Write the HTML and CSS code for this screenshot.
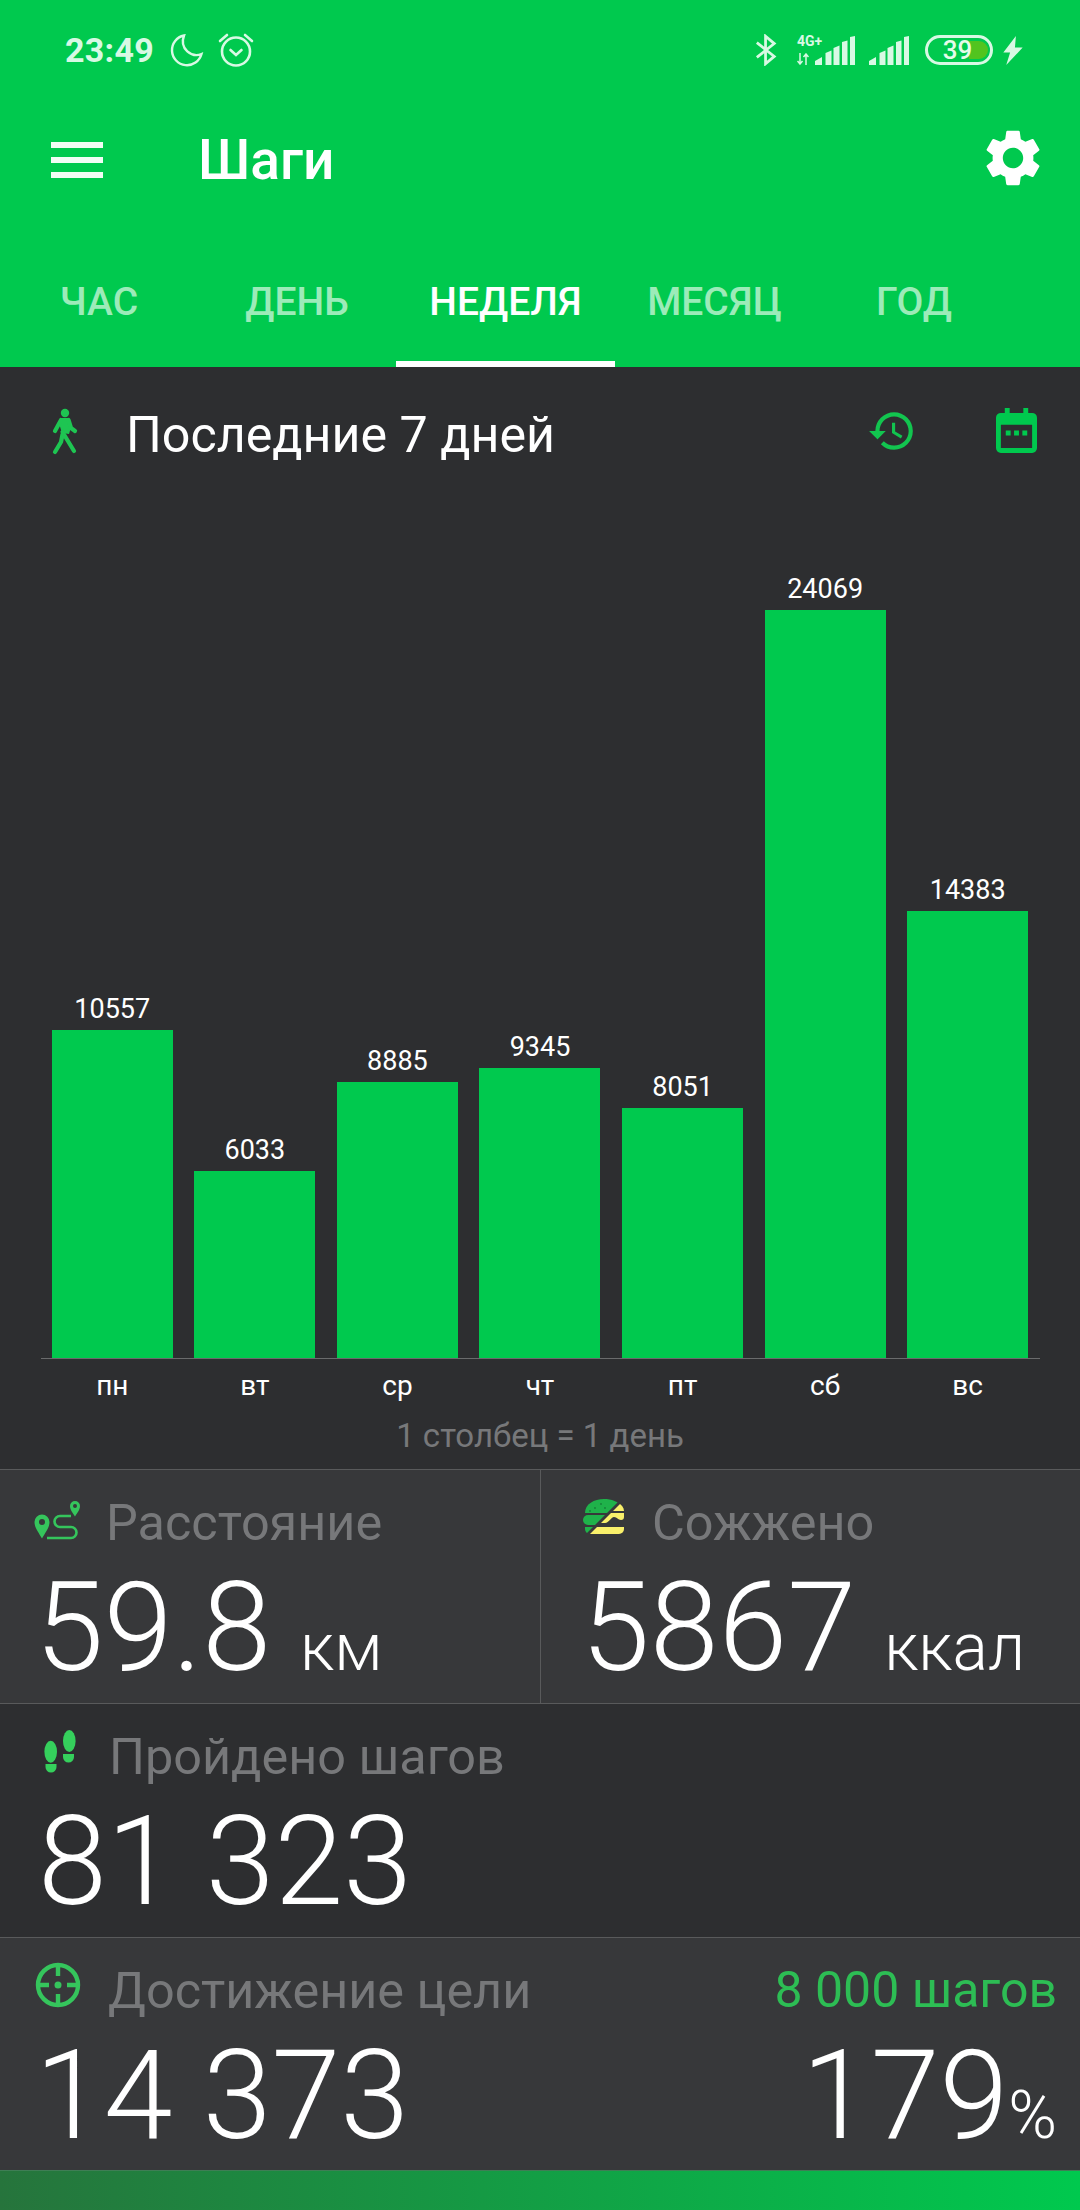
FILE: index.html
```html
<!DOCTYPE html>
<html lang="ru">
<head>
<meta charset="utf-8">
<title>Шаги</title>
<link rel="stylesheet" href="styles.css">
</head>
<body>
<div class="page">
  <header class="appbar">
    <div class="status">
      <div class="status-left">
        <span class="clock">23:49</span>
        <svg class="ico-moon" viewBox="0 0 34 34"><path d="M14 2.500A15 15 0 1 0 31.500 21 C22 25 9 16 14 2.500Z"/></svg>
        <svg class="ico-alarm" viewBox="0 0 36 36"><circle cx="18" cy="19.500" r="14"/><path d="M12.500 18l5.500 5 5.500-5M2 9l7-6M34 9l-7-6"/></svg>
      </div>
      <div class="status-right">
        <svg class="ico-bt" viewBox="0 0 24 32"><path d="M2 8l19 15-9.500 8V1L21 9 2 24"/></svg>
        <div class="net">
          <span class="net-type">4G+</span>
          <svg class="ico-arrows" viewBox="0 0 12 12"><path d="M3 0v11M0.500 8L3 11 5.500 8M9 12V1M6.500 4L9 1l2.500 3"/></svg>
          <svg class="ico-signal net-bars" viewBox="0 0 40 29"><path d="M0 29v-4l7-4v8zM10.500 29V17l6-2.500V29zM18.500 29V12l6-2.500V29zM27 29V6l5.500-1.500V29zM35 29V1l5-1v29z"/></svg>
        </div>
        <svg class="ico-signal" viewBox="0 0 40 29"><path d="M0 29v-4l7-4v8zM10.500 29V17l6-2.500V29zM18.500 29V12l6-2.500V29zM27 29V6l5.500-1.500V29zM35 29V1l5-1v29z"/></svg>
        <div class="battery"><span class="battery-fill"></span><span class="battery-num">39</span></div>
        <svg class="ico-bolt" viewBox="0 0 20 30"><path d="M13 0L0 17h7L3 30 20 12h-8z"/></svg>
      </div>
    </div>
    <div class="toolbar">
      <div class="burger"><span></span><span></span><span></span></div>
      <h1 class="title">Шаги</h1>
      <svg class="ico-gear" viewBox="0 0 24 24"><path d="M19.140 12.940c.04-.3.06-.61.06-.94 0-.32-.02-.64-.07-.94l2.030-1.580a.49.49 0 0 0 .12-.61l-1.920-3.320a.488.488 0 0 0-.59-.22l-2.390.96c-.5-.38-1.030-.7-1.620-.94l-.36-2.540a.484.484 0 0 0-.48-.41h-3.840c-.24 0-.43.17-.47.41l-.36 2.540c-.59.24-1.130.57-1.620.94l-2.390-.96c-.22-.08-.47 0-.59.22L2.740 8.870c-.12.21-.08.47.12.61l2.030 1.580c-.05.3-.09.63-.09.94s.02.64.07.94l-2.030 1.580a.49.49 0 0 0-.12.61l1.920 3.320c.12.22.37.29.59.22l2.390-.96c.5.38 1.030.7 1.620.94l.36 2.540c.05.24.24.41.48.41h3.840c.24 0 .44-.17.47-.41l.36-2.540c.59-.24 1.130-.56 1.620-.94l2.390.96c.22.08.47 0 .59-.22l1.920-3.320c.12-.22.07-.47-.12-.61l-2.010-1.580zM12 15.600c-1.980 0-3.600-1.620-3.600-3.600s1.620-3.600 3.600-3.600 3.600 1.620 3.600 3.600-1.620 3.600-3.600 3.600z"/></svg>
    </div>
    <nav class="tabs">
      <a class="tab">ЧАС</a>
      <a class="tab">ДЕНЬ</a>
      <a class="tab tab-active">НЕДЕЛЯ</a>
      <a class="tab">МЕСЯЦ</a>
      <a class="tab">ГОД</a>
    </nav>
  </header>

  <main class="content">
    <section class="chart-card">
      <div class="range">
        <svg class="ico-walk" viewBox="0 0 30 48">
          <circle cx="15" cy="6" r="4.200"/>
          <path class="fill" d="M10.500 11h8l2 11-1.500 5-7-1-2.500-8z"/>
          <path class="limb" d="M11 13l-6 11M18.500 13l2.500 8 4 3M12.500 25l3 5 8.500 14M12.500 27.500L11 35 5 45"/>
        </svg>
        <span class="range-text">Последние 7 дней</span>
        <svg class="ico-history" viewBox="0 0 24 24"><path d="M13 3a9 9 0 0 0-9 9H1l3.890 3.890.07.14L9 12H6c0-3.870 3.130-7 7-7s7 3.130 7 7-3.130 7-7 7c-1.930 0-3.680-.79-4.940-2.060l-1.420 1.420A8.954 8.954 0 0 0 13 21a9 9 0 0 0 0-18zm-1 5v5l4.280 2.540.72-1.210-3.500-2.080V8H12z"/></svg>
        <svg class="ico-cal" viewBox="0 0 42 46"><path fill-rule="evenodd" d="M9 0h5v5h14V0h5v5h4a5 5 0 0 1 5 5v31a5 5 0 0 1-5 5H5a5 5 0 0 1-5-5V10a5 5 0 0 1 5-5h4zM5 17v24h32V17z"/><path d="M10 23h5v5h-5zM18.500 23h5v5h-5zM27 23h5v5h-5z"/></svg>
      </div>
      <div class="bars">
        <div class="col"><span class="val">10557</span><div class="bar" style="height:328px"></div></div>
        <div class="col"><span class="val">6033</span><div class="bar" style="height:187px"></div></div>
        <div class="col"><span class="val">8885</span><div class="bar" style="height:276px"></div></div>
        <div class="col"><span class="val">9345</span><div class="bar" style="height:290px"></div></div>
        <div class="col"><span class="val">8051</span><div class="bar" style="height:250px"></div></div>
        <div class="col"><span class="val">24069</span><div class="bar" style="height:748px"></div></div>
        <div class="col"><span class="val">14383</span><div class="bar" style="height:447px"></div></div>
      </div>
      <div class="days">
        <span>пн</span><span>вт</span><span>ср</span><span>чт</span><span>пт</span><span>сб</span><span>вс</span>
      </div>
      <p class="caption">1 столбец = 1 день</p>
    </section>

    <section class="stats">
      <div class="stat stat-light stat-half">
        <div class="stat-head">
          <svg class="ico-route" viewBox="0 0 56 46">
            <path class="pin" fill-rule="evenodd" d="M12 42.500C9 37 4.500 32 4.500 26a7.500 7.500 0 0 1 15 0c0 6-4.500 11-7.500 16.500zM12 23a3 3 0 1 0 0 6 3 3 0 0 0 0-6z"/>
            <path class="pin" fill-rule="evenodd" d="M45 20.500C43 17 40 14 40 10a5 5 0 0 1 10 0c0 4-3 7-5 10.500zM45 8a2 2 0 1 0 0 4 2 2 0 0 0 0-4z"/>
            <path class="road" d="M41 20H30a5.500 5.500 0 0 0 0 11h11a5.500 5.500 0 0 1 0 11H17"/>
          </svg>
          <span class="stat-label">Расстояние</span>
        </div>
        <div class="stat-value"><span class="num">59.8</span><span class="unit">км</span></div>
      </div>
      <div class="stat stat-light stat-half stat-right">
        <div class="stat-head">
          <svg class="ico-burger" viewBox="0 0 46 38">
            <defs>
              <clipPath id="upper"><path d="M0 0H41L0 41z"/></clipPath>
              <clipPath id="lower"><path d="M46 -1V38H7z"/></clipPath>
            </defs>
            <g class="burger-g" clip-path="url(#upper)">
              <path d="M4 15C4 6 13 1 23 1s20 5 20 14z"/>
              <rect x="2" y="17" width="41" height="10" rx="5"/>
              <path d="M4 29h39v2a5 5 0 0 1-5 5H9a5 5 0 0 1-5-5z"/>
            </g>
            <g class="burger-dots">
              <circle cx="20" cy="6" r=".9"/><circle cx="14" cy="10" r=".9"/><circle cx="24" cy="10" r=".9"/><circle cx="9" cy="13" r=".9"/>
            </g>
            <g class="burger-y" clip-path="url(#lower)">
              <path d="M4 13C4 6 13 1 23 1s20 5 20 12z"/>
              <path d="M14 15h29v4a3 3 0 0 1-3 3c-3 0-4-3-7-3s-5 6-9 6H10z"/>
              <path d="M4 29h39v2a5 5 0 0 1-5 5H9a5 5 0 0 1-5-5z"/>
            </g>
          </svg>
          <span class="stat-label">Сожжено</span>
        </div>
        <div class="stat-value"><span class="num">5867</span><span class="unit unit-wide">ккал</span></div>
      </div>
      <div class="stat stat-wide stat-steps">
        <div class="stat-head">
          <svg class="ico-feet" viewBox="0 0 40 50">
            <ellipse cx="10.700" cy="24.700" rx="6.300" ry="11"/>
            <path d="M5.500 37h11v3a5.500 5.500 0 0 1-11 0z"/>
            <ellipse cx="29.300" cy="14" rx="6.300" ry="11"/>
            <path d="M23 27h11v3a5.500 5.500 0 0 1-11 0z"/>
          </svg>
          <span class="stat-label">Пройдено шагов</span>
        </div>
        <div class="stat-value"><span class="num">81 323</span></div>
      </div>
      <div class="stat stat-light stat-wide">
        <div class="stat-head">
          <svg class="ico-target" viewBox="0 0 46 46">
            <circle class="ring" cx="23" cy="23" r="20"/>
            <circle class="dot" cx="23" cy="23" r="3.500"/>
            <path class="ring" d="M23 3v11M23 32v11M3 23h11M32 23h11"/>
          </svg>
          <span class="stat-label">Достижение цели</span>
          <span class="goal">8 000 шагов</span>
        </div>
        <div class="stat-value stat-split"><span class="num">14 373</span><span class="pct"><span class="num">179</span><span class="pct-sign">%</span></span></div>
      </div>
    </section>
    <div class="progress"></div>
  </main>
</div>
</body>
</html>
```

FILE: styles.css
```css
* { box-sizing: border-box; margin: 0; padding: 0; }

html, body { width: 1080px; height: 2210px; overflow: hidden; }

body { font-family: Roboto, "Noto Sans", sans-serif; background: #2d2e30; color: #fff; }

.page { width: 1080px; height: 2210px; display: flex; flex-direction: column; }

/* Green header: status bar, toolbar, tabs */
.appbar { height: 367px; background: #00c94e; display: flex; flex-direction: column; flex: none; }

.status { height: 100px; display: flex; justify-content: space-between; align-items: center; padding: 0 57px 0 65px; color: #d8f9e4; }
.status-left, .status-right { display: flex; align-items: center; }
.clock { font-size: 34px; font-weight: 700; letter-spacing: 0.3px; }

.ico-moon { width: 34px; height: 34px; margin-left: 16px; fill: none; stroke: #d8f9e4; stroke-width: 2.400; }
.ico-alarm { width: 36px; height: 36px; margin-left: 14px; fill: none; stroke: #d8f9e4; stroke-width: 2.600; stroke-linecap: round; }
.ico-bt { width: 22px; height: 32px; margin-right: 20px; fill: none; stroke: #d8f9e4; stroke-width: 3; }

.net { position: relative; width: 58px; height: 29px; margin-right: 14px; }
.net-type { position: absolute; left: 0; top: -3px; font-size: 14px; line-height: 16px; font-weight: 700; }
.ico-arrows { position: absolute; left: 0; bottom: 0; width: 12px; height: 12px; fill: none; stroke: #d8f9e4; stroke-width: 1.500; }
.ico-signal { width: 40px; height: 29px; fill: #d8f9e4; }
.net-bars { position: absolute; right: 0; top: 0; }

.battery { position: relative; width: 68px; height: 30px; margin-left: 16px; border: 3px solid #d8f9e4; border-radius: 15px; display: flex; align-items: center; justify-content: center; }
.battery-fill { position: absolute; left: 41px; top: 3px; width: 19px; height: 18px; background: #52c41f; border-radius: 0 9px 9px 0; }
.battery-num { position: relative; font-size: 26px; font-weight: 500; color: #e6fbe9; margin-right: 3px; }
.ico-bolt { width: 20px; height: 29px; margin-left: 10px; fill: #d8f9e4; }

.toolbar { height: 120px; display: flex; align-items: center; padding: 0 33px 0 51px; flex: none; }
.burger { width: 52px; display: flex; flex-direction: column; gap: 9px; }
.burger span { display: block; height: 6px; background: #f2fdf5; }
.title { flex: 1; margin-left: 95px; font-size: 55px; font-weight: 500; line-height: 60px; }
.ico-gear { width: 68px; height: 68px; fill: #fff; margin-top: -5px; }

.tabs { flex: 1; display: grid; grid-template-columns: 198px 198px 219px 199px 200px; }
.tab { display: flex; align-items: center; justify-content: center; font-size: 39px; font-weight: 500; color: #9cebb9; padding-top: 18px; padding-bottom: 2px; }
.tab-active { color: #fff; border-bottom: 6px solid #fff; padding-top: 22px; padding-bottom: 0; }

/* Dark content area */
.content { flex: 1; display: flex; flex-direction: column; min-height: 0; }

.chart-card { height: 1102px; flex: none; display: flex; flex-direction: column; padding-bottom: 14px; }

.range { height: 134px; display: flex; align-items: center; padding: 0 43px 0 50px; flex: none; }
.range-text { flex: 1; margin-left: 46px; font-size: 50.200px; line-height: 56px; margin-top: 2px; }
.ico-walk { width: 30px; height: 48px; margin-top: -7px; }
.ico-walk circle, .ico-walk .fill { fill: #1ec552; }
.ico-walk .limb { fill: none; stroke: #1ec552; stroke-width: 4.200; stroke-linecap: round; stroke-linejoin: round; }
.ico-history { width: 50px; height: 50px; margin-right: 79px; fill: #12c44f; margin-top: -6px; }
.ico-cal { width: 41px; height: 45px; fill: #00c94e; margin-top: -8px; }

.bars { flex: 1; margin: 0 40px 0 41px; padding-right: 1px; display: grid; grid-template-columns: repeat(7, 1fr); align-items: end; border-bottom: 1px solid #6a6b6c; }
.col { display: flex; flex-direction: column; align-items: center; }
.val { font-size: 27px; line-height: 34px; margin-bottom: 4px; }
.bar { width: 121px; background: #00c94e; }

.days { margin: 0 41px 0 41px; display: grid; grid-template-columns: repeat(7, 1fr); padding-top: 9px; flex: none; }
.days span { text-align: center; font-size: 28px; line-height: 36px; }
.caption { text-align: center; font-size: 33px; line-height: 38px; margin-top: 13px; color: #77787a; }

/* Summary panels */
.stats { flex: 1; display: grid; grid-template-columns: 540px 540px; grid-template-rows: 234px 234px 233px; }
.stat { padding: 0 23px 0 35px; border-top: 1px solid #595a5b; display: flex; flex-direction: column; }
.stat-light { background: #37383a; }
.stat-wide { grid-column: 1 / 3; }
.stat-half.stat-right { border-left: 1px solid #595a5b; padding-left: 40px; }
.stat-steps .stat-value { padding-left: 3px; }

.stat-head { height: 106px; flex: none; display: flex; align-items: center; }
.stat-label { font-size: 50.400px; color: #77787a; line-height: 56px; margin-left: 27px; }
.goal { margin-left: auto; font-size: 50px; color: #2dbd54; line-height: 56px; margin-top: -2px; }

.stat-value { display: flex; align-items: baseline; margin-top: -10px; }
.stat-split { justify-content: space-between; }
.num { font-size: 124px; font-weight: 300; line-height: 124px; white-space: pre; }
.unit { font-size: 66px; font-weight: 300; margin-left: 29px; }
.unit-wide { margin-left: 28px; }
.pct { display: flex; align-items: baseline; }
.pct-sign { font-size: 66px; font-weight: 300; }

.ico-route { width: 56px; height: 46px; margin-left: -5px; margin-right: -7px; margin-top: -8px; flex: none; }
.ico-route .pin { fill: #35c55c; }
.ico-route .road { fill: none; stroke: #35c55c; stroke-width: 2.600; }
.ico-burger { width: 46px; height: 38px; margin-top: -12px; margin-right: -2px; flex: none; }
.burger-g { fill: #1fb24a; }
.burger-dots { fill: #167f38; }
.burger-y { fill: #f9f06b; }
.ico-feet { width: 40px; height: 50px; margin-top: -10px; margin-left: 5px; margin-right: 2px; flex: none; fill: #35d05c; }
.ico-target { width: 46px; height: 46px; margin-top: -12px; flex: none; }
.ico-target .ring { fill: none; stroke: #35c55c; stroke-width: 4.400; }
.ico-target .dot { fill: #35c55c; }

.progress { height: 40px; flex: none; background: linear-gradient(90deg, #26743c, #00c94e); border-top: 1px solid #3f7d55; }
```
